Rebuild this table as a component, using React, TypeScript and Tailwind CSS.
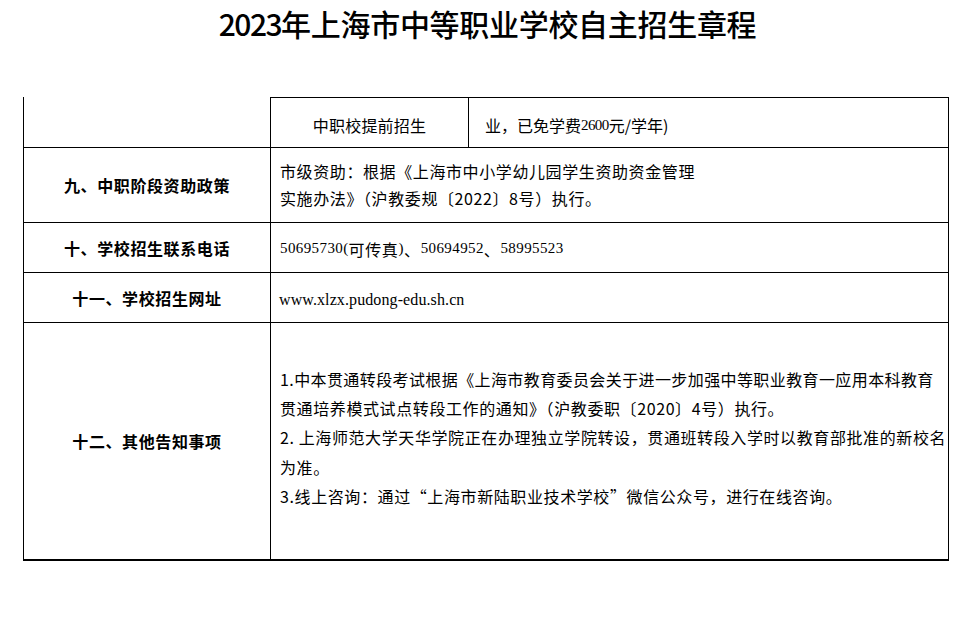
import React from "react";

const cjk = "font-['Noto_Sans_CJK_SC',sans-serif]";

export default function App() {
  return (
    <div className={`w-[975px] h-[628px] bg-white overflow-hidden text-black ${cjk}`}>
      <h1 className="pt-[5px] text-center text-[30px] leading-[36px] font-medium tracking-[-0.3px]">
        <span className="tracking-[-1.5px]">2023</span>年上海市中等职业学校自主招生章程
      </h1>
      <div className="ml-[23px] mt-[56px] w-[926px] border-l border-black grid grid-cols-[247px_678px] text-[16px] tracking-[0.6px]">
        {/* row 1 */}
        <div className="h-[51px] border-r border-b border-black" />
        <div className="h-[51px] border-t border-r border-b border-black flex">
          <div className="w-[198px] border-r border-black flex items-center justify-center pt-[5px] tracking-[0.2px]">
            中职校提前招生
          </div>
          <div className="flex-1 flex items-center pl-[16px] pt-[5px] tracking-[0px] whitespace-nowrap">
            业，已免学费<span className="font-['Liberation_Serif',serif] text-[15px] tracking-[-0.6px]">2600</span>元/学年)
          </div>
        </div>

        {/* row 2 */}
        <div className="h-[75px] border-r border-b border-black flex items-center justify-center font-bold">
          九、中职阶段资助政策
        </div>
        <div className="h-[75px] border-r border-b border-black flex flex-col justify-center pl-[9px] leading-[27px] whitespace-nowrap">
          <div>市级资助：根据《上海市中小学幼儿园学生资助资金管理</div>
          <div>实施办法》（沪教委规〔2022〕8号）执行。</div>
        </div>

        {/* row 3 */}
        <div className="h-[50px] border-r border-b border-black flex items-center justify-center font-bold">
          十、学校招生联系电话
        </div>
        <div className="h-[50px] border-r border-b border-black flex items-center pl-[9px] pt-[2px] whitespace-nowrap tracking-[0.6px]">
          <span className="font-['Liberation_Serif',serif] text-[15px] tracking-[0.4px]">50695730(</span>
          <span>可传真</span>
          <span className="font-['Liberation_Serif',serif] text-[15px]">)</span>
          <span>、</span>
          <span className="font-['Liberation_Serif',serif] text-[15px] tracking-[0.4px]">50694952</span>
          <span>、</span>
          <span className="font-['Liberation_Serif',serif] text-[15px] tracking-[0.4px]">58995523</span>
        </div>

        {/* row 4 */}
        <div className="h-[50px] border-r border-b border-black flex items-center justify-center font-bold">
          十一、学校招生网址
        </div>
        <div className="h-[50px] border-r border-b border-black flex items-center pl-[8px] pt-[4px] whitespace-nowrap tracking-[0.1px] font-['Liberation_Serif',serif] text-[16px]">
          www.xlzx.pudong-edu.sh.cn
        </div>

        {/* row 5 */}
        <div className="h-[238px] border-r border-b-2 border-black flex items-center justify-center font-bold">
          十二、其他告知事项
        </div>
        <div className="h-[238px] border-r border-b-2 border-black flex flex-col justify-center pl-[9px] pb-[6px] leading-[29.2px] whitespace-nowrap">
          <div className="tracking-[0.4px]">1.中本贯通转段考试根据《上海市教育委员会关于进一步加强中等职业教育一应用本科教育</div>
          <div>贯通培养模式试点转段工作的通知》（沪教委职〔2020〕4号）执行。</div>
          <div>2. 上海师范大学天华学院正在办理独立学院转设，贯通班转段入学时以教育部批准的新校名</div>
          <div>为准。</div>
          <div>3.线上咨询：通过“上海市新陆职业技术学校”微信公众号，进行在线咨询。</div>
        </div>
      </div>
    </div>
  );
}
